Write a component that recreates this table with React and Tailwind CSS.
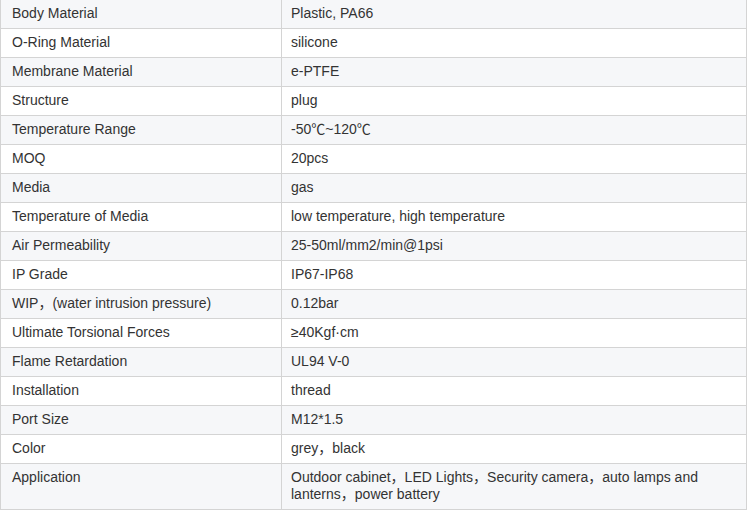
import React from "react";

const rows = [
  ["Body Material", "Plastic, PA66"],
  ["O-Ring Material", "silicone"],
  ["Membrane Material", "e-PTFE"],
  ["Structure", "plug"],
  ["Temperature Range", "-50℃~120℃"],
  ["MOQ", "20pcs"],
  ["Media", "gas"],
  ["Temperature of Media", "low temperature, high temperature"],
  ["Air Permeability", "25-50ml/mm2/min@1psi"],
  ["IP Grade", "IP67-IP68"],
  ["WIP，(water intrusion pressure)", "0.12bar"],
  ["Ultimate Torsional Forces", "≥40Kgf·cm"],
  ["Flame Retardation", "UL94 V-0"],
  ["Installation", "thread"],
  ["Port Size", "M12*1.5"],
  ["Color", "grey，black"],
  ["Application", "Outdoor cabinet，LED Lights，Security camera，auto lamps and lanterns，power battery"],
];

export default function App() {
  return (
    <div
      className="w-[748px] h-[512px] bg-white overflow-hidden text-[14px] text-[#333333]"
      style={{ fontFamily: '"Liberation Sans", Arial, "Noto Sans CJK KR", sans-serif' }}
    >
      <div className="w-[747px] border-l border-r border-[#d4d4d4]">
        {rows.map(([k, v], i) => (
          <div
            key={k}
            className={`flex border-b border-[#d4d4d4] ${i % 2 === 0 ? "bg-[#f6f7f9]" : "bg-white"}`}
          >
            <div className="w-[281px] shrink-0 border-r border-[#d4d4d4] pl-[11px] pr-2 pt-[4px] pb-[6px] leading-[18px] min-h-[28px]">
              {k}
            </div>
            <div className="flex-1 pl-[9px] pr-[20px] pt-[4px] pb-[6px] min-h-[28px]">
              <span className="block leading-[17px] pt-[0.5px]">{v}</span>
            </div>
          </div>
        ))}
      </div>
    </div>
  );
}
